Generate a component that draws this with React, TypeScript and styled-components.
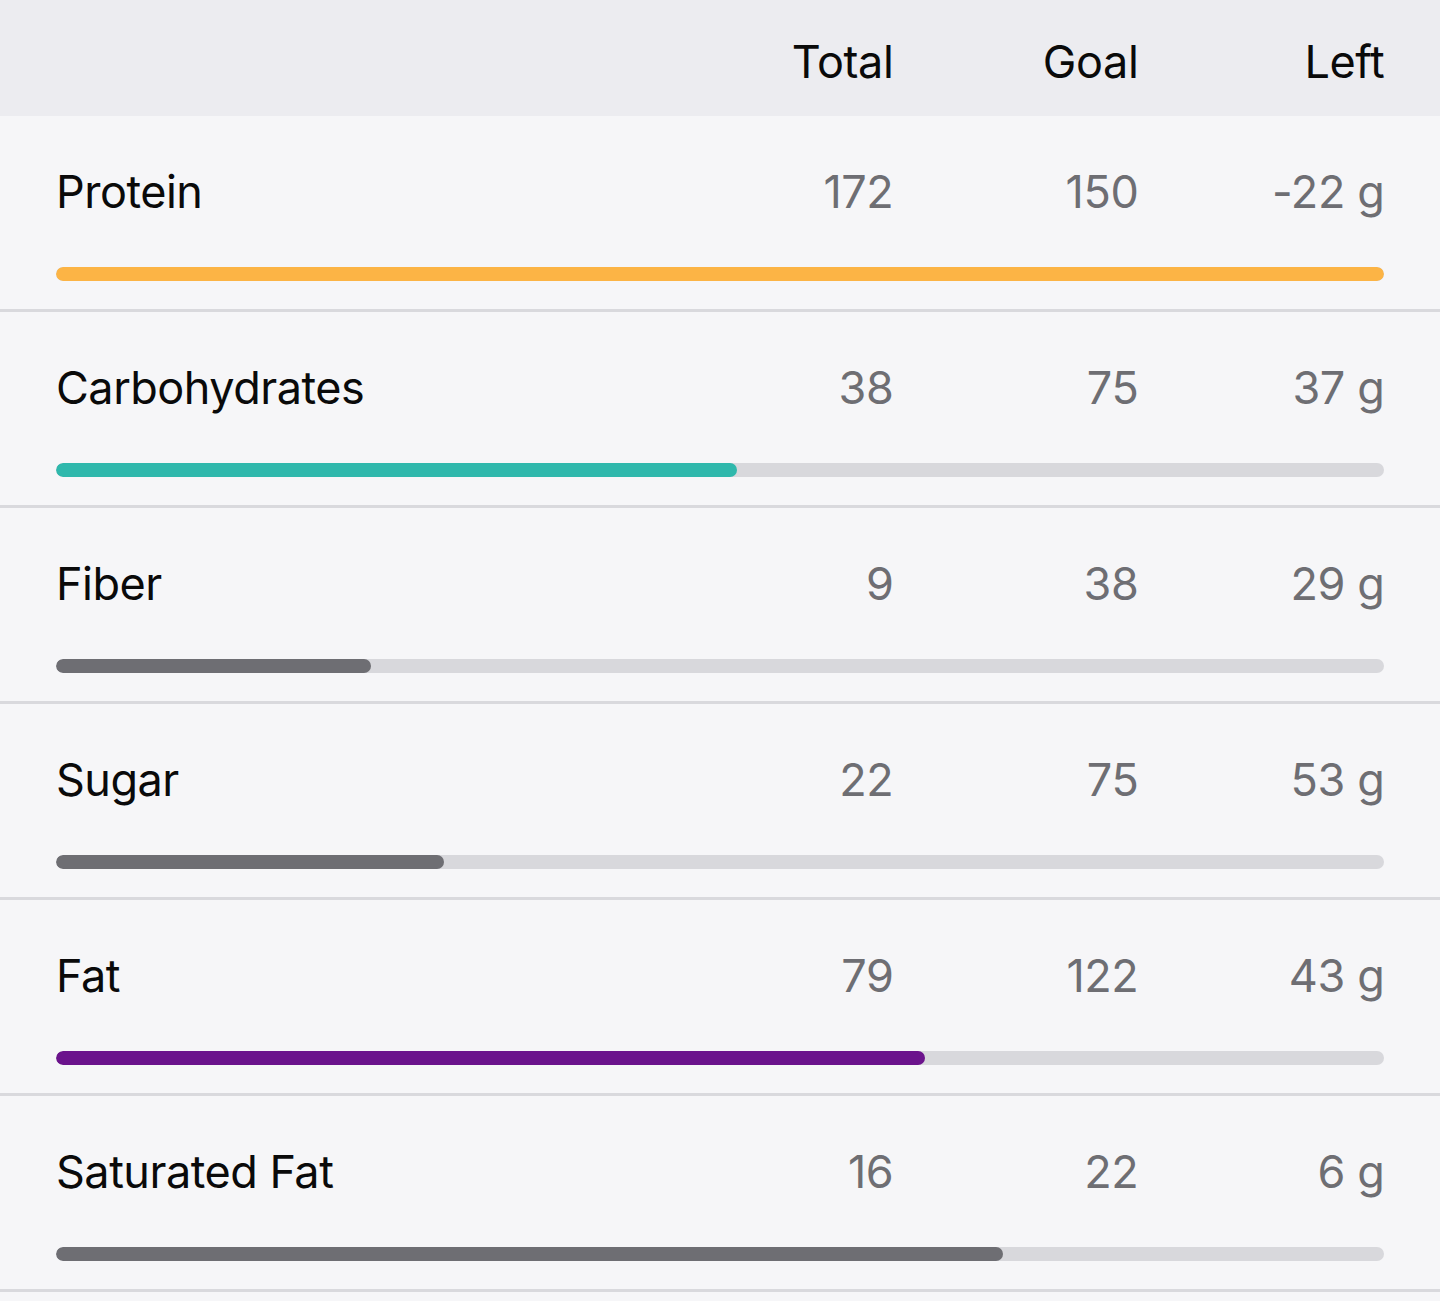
import React from "react";
import styled, { createGlobalStyle } from "styled-components";

const GlobalStyle = createGlobalStyle`
  html, body {
    margin: 0;
    padding: 0;
    background: #f6f6f8;
  }
  body {
    font-family: Inter, "Noto Sans", "Liberation Sans", sans-serif;
    -webkit-font-smoothing: antialiased;
  }
`;

const Table = styled.div`
  width: 1440px;
  display: flex;
  flex-direction: column;
  background: #f6f6f8;
`;

const Grid = styled.div`
  display: grid;
  grid-template-columns: 1fr 245px 245px 246px;
  align-items: center;
`;

const Header = styled(Grid)`
  height: 116px;
  box-sizing: border-box;
  padding: 36px 56px 28px;
  background: #ececf0;
`;

const HeadCell = styled.div`
  font-size: 45px;
  line-height: 52px;
  color: #0a0a0a;
  text-align: right;
  letter-spacing: -0.4px;
  margin-right: -0.4px;
`;

const Row = styled.div`
  display: flex;
  flex-direction: column;
  gap: 49px;
  padding: 50px 56px 28px;
  border-bottom: 3px solid #d9d9dd;
`;

const Name = styled.div`
  font-size: 45px;
  line-height: 52px;
  color: #0a0a0a;
  letter-spacing: -0.5px;
`;

const Value = styled.div`
  font-size: 45px;
  line-height: 52px;
  color: #6e6e73;
  text-align: right;
  letter-spacing: -0.4px;
  margin-right: -0.4px;
`;

const Track = styled.div`
  height: 14px;
  border-radius: 7px;
  background: #d8d8dc;
  overflow: hidden;
`;

const Fill = styled.div<{ $color: string }>`
  height: 100%;
  border-radius: 7px;
  background: ${(p) => p.$color};
`;

const Spacer = styled.div`
  height: 9px;
`;

type Nutrient = {
  name: string;
  total: number;
  goal: number;
  left: string;
  color: string;
  pct: number;
};

const data: Nutrient[] = [
  { name: "Protein", total: 172, goal: 150, left: "-22 g", color: "#fcb445", pct: 100 },
  { name: "Carbohydrates", total: 38, goal: 75, left: "37 g", color: "#2fb8ac", pct: 51.3 },
  { name: "Fiber", total: 9, goal: 38, left: "29 g", color: "#6e6e73", pct: 23.7 },
  { name: "Sugar", total: 22, goal: 75, left: "53 g", color: "#6e6e73", pct: 29.2 },
  { name: "Fat", total: 79, goal: 122, left: "43 g", color: "#6b138c", pct: 65.4 },
  { name: "Saturated Fat", total: 16, goal: 22, left: "6 g", color: "#6e6e73", pct: 71.3 },
];

export default function App() {
  return (
    <>
      <GlobalStyle />
      <Table>
        <Header>
          <div />
          <HeadCell>Total</HeadCell>
          <HeadCell>Goal</HeadCell>
          <HeadCell>Left</HeadCell>
        </Header>
        {data.map((n) => (
          <Row key={n.name}>
            <Grid>
              <Name>{n.name}</Name>
              <Value>{n.total}</Value>
              <Value>{n.goal}</Value>
              <Value>{n.left}</Value>
            </Grid>
            <Track>
              <Fill $color={n.color} style={{ width: `${n.pct}%` }} />
            </Track>
          </Row>
        ))}
        <Spacer />
      </Table>
    </>
  );
}
